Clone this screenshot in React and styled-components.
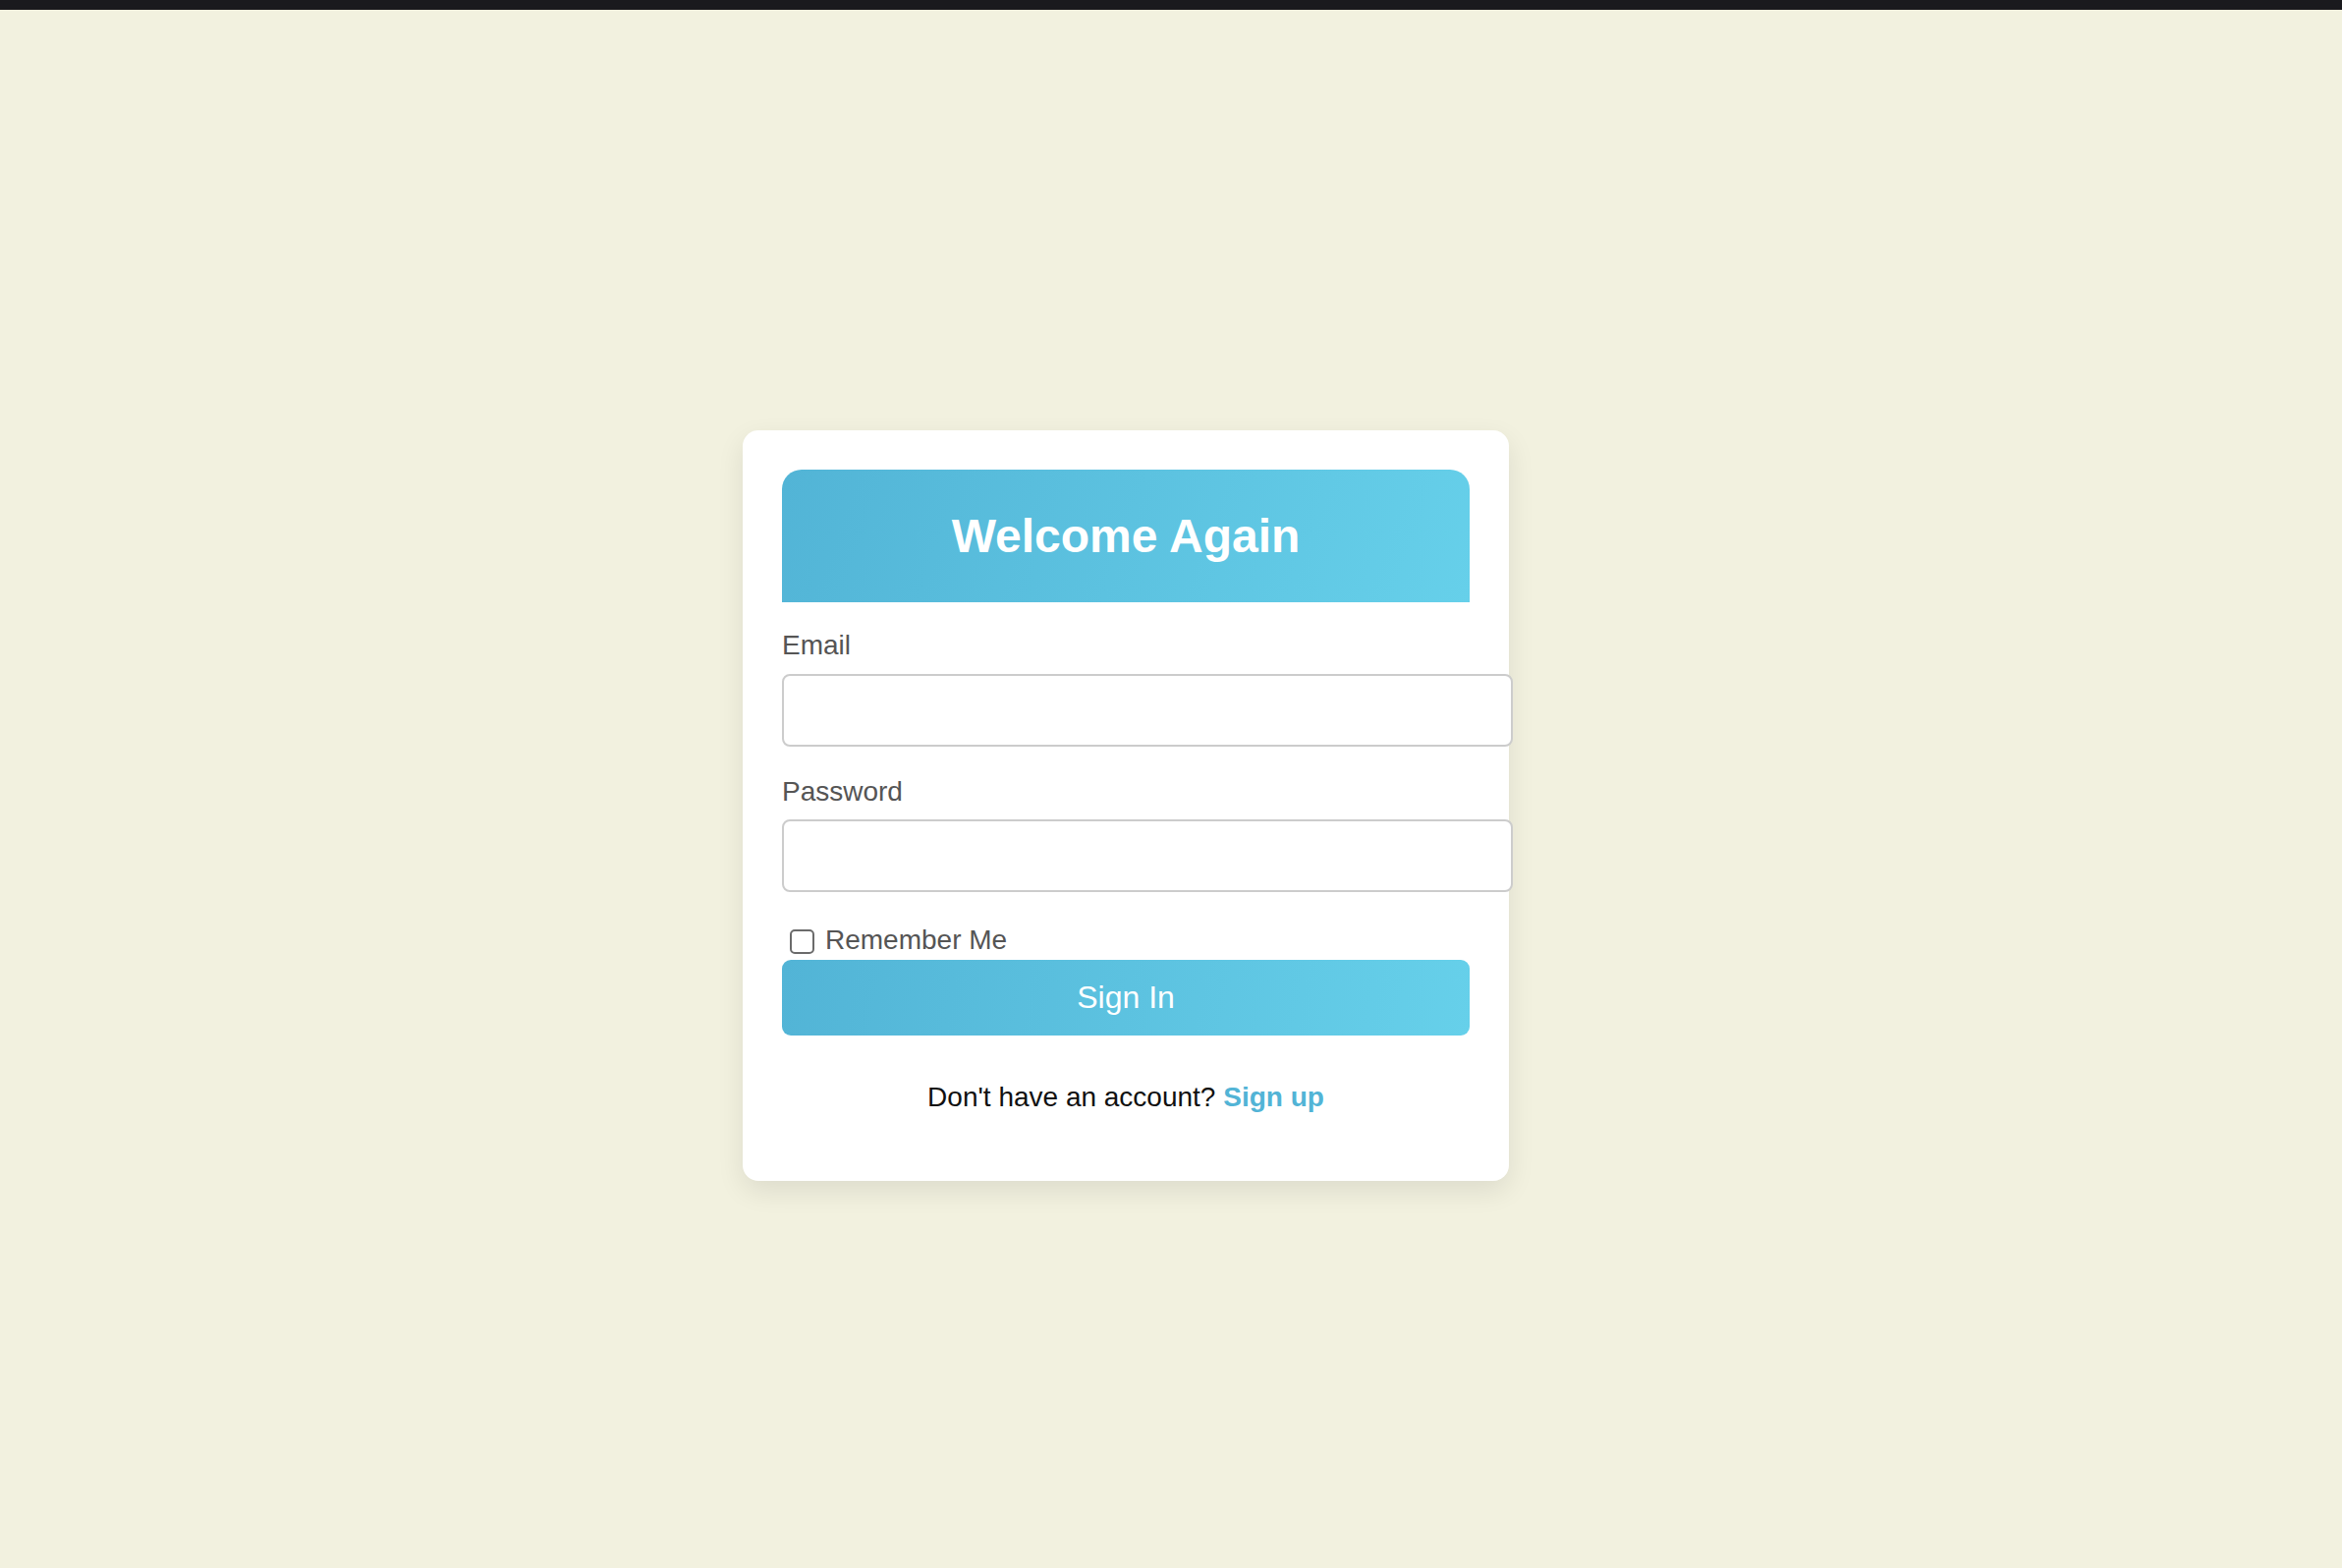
import React from 'react';
import styled, { createGlobalStyle } from 'styled-components';

const GlobalStyle = createGlobalStyle`
  body {
    margin: 0;
    background-color: #f2f1df;
    font-family: 'Liberation Sans', Arial, Helvetica, sans-serif;
  }
`;

const TopBar = styled.div`
  height: 10px;
  background-color: #1a1a1e;
`;

const Page = styled.div`
  min-height: 1586px;
  box-sizing: border-box;
  padding: 34px 92px 0 0;
  display: flex;
  justify-content: center;
  align-items: center;
`;

const Card = styled.div`
  width: 700px;
  padding: 40px;
  background-color: #fff;
  border-radius: 16px;
  box-shadow: 0 10px 28px rgba(0, 0, 0, 0.09);
`;

const Header = styled.div`
  height: 135px;
  display: flex;
  align-items: center;
  justify-content: center;
  border-radius: 20px 20px 0 0;
  background: linear-gradient(110deg, #52b4d6 0%, #66d0ea 100%);
`;

const Title = styled.h1`
  margin: 0;
  color: #fff;
  font-size: 48px;
  font-weight: bold;
`;

const Label = styled.label`
  display: block;
  margin-top: ${props => props.$top}px;
  font-size: 28px;
  line-height: 32px;
  color: #555;
`;

const Input = styled.input`
  display: block;
  width: 100%;
  height: 70px;
  margin-top: ${props => props.$top}px;
  padding: 0 20px;
  border: 2px solid #cccccc;
  border-radius: 8px;
  background: #fff;
  font-size: 28px;
  outline: none;
`;

const RememberRow = styled.label`
  display: flex;
  align-items: center;
  gap: 11px;
  margin-top: 33px;
  padding-left: 8px;
  font-size: 28px;
  line-height: 32px;
  color: #555;
`;

const Checkbox = styled.input`
  appearance: none;
  -webkit-appearance: none;
  margin: 2px 0 0 0;
  width: 25px;
  height: 25px;
  border: 2px solid #6b6b6b;
  border-radius: 5px;
  background: #fff;
  box-sizing: border-box;
`;

const SubmitButton = styled.button`
  display: block;
  width: 100%;
  height: 77px;
  margin-top: 4px;
  border: none;
  border-radius: 9px;
  background: linear-gradient(100deg, #52b4d6 0%, #66d0ea 100%);
  color: #fff;
  font-family: inherit;
  font-size: 32px;
  cursor: pointer;
`;

const Footer = styled.p`
  margin: 47px 0 29px;
  text-align: center;
  font-size: 28px;
  line-height: 32px;
  color: #111;
  a {
    color: #52b4d6;
    font-weight: bold;
    text-decoration: none;
  }
`;

export default function App() {
  return (
    <>
      <GlobalStyle />
      <TopBar />
      <Page>
        <Card>
          <Header>
            <Title>Welcome Again</Title>
          </Header>
          <form onSubmit={e => e.preventDefault()}>
            <Label $top={28} htmlFor="email">Email</Label>
            <Input $top={13} id="email" type="email" />
            <Label $top={30} htmlFor="password">Password</Label>
            <Input $top={12} id="password" type="password" />
            <RememberRow>
              <Checkbox type="checkbox" />
              Remember Me
            </RememberRow>
            <SubmitButton type="submit">Sign In</SubmitButton>
          </form>
          <Footer>
            Don't have an account? <a href="#">Sign up</a>
          </Footer>
        </Card>
      </Page>
    </>
  );
}
